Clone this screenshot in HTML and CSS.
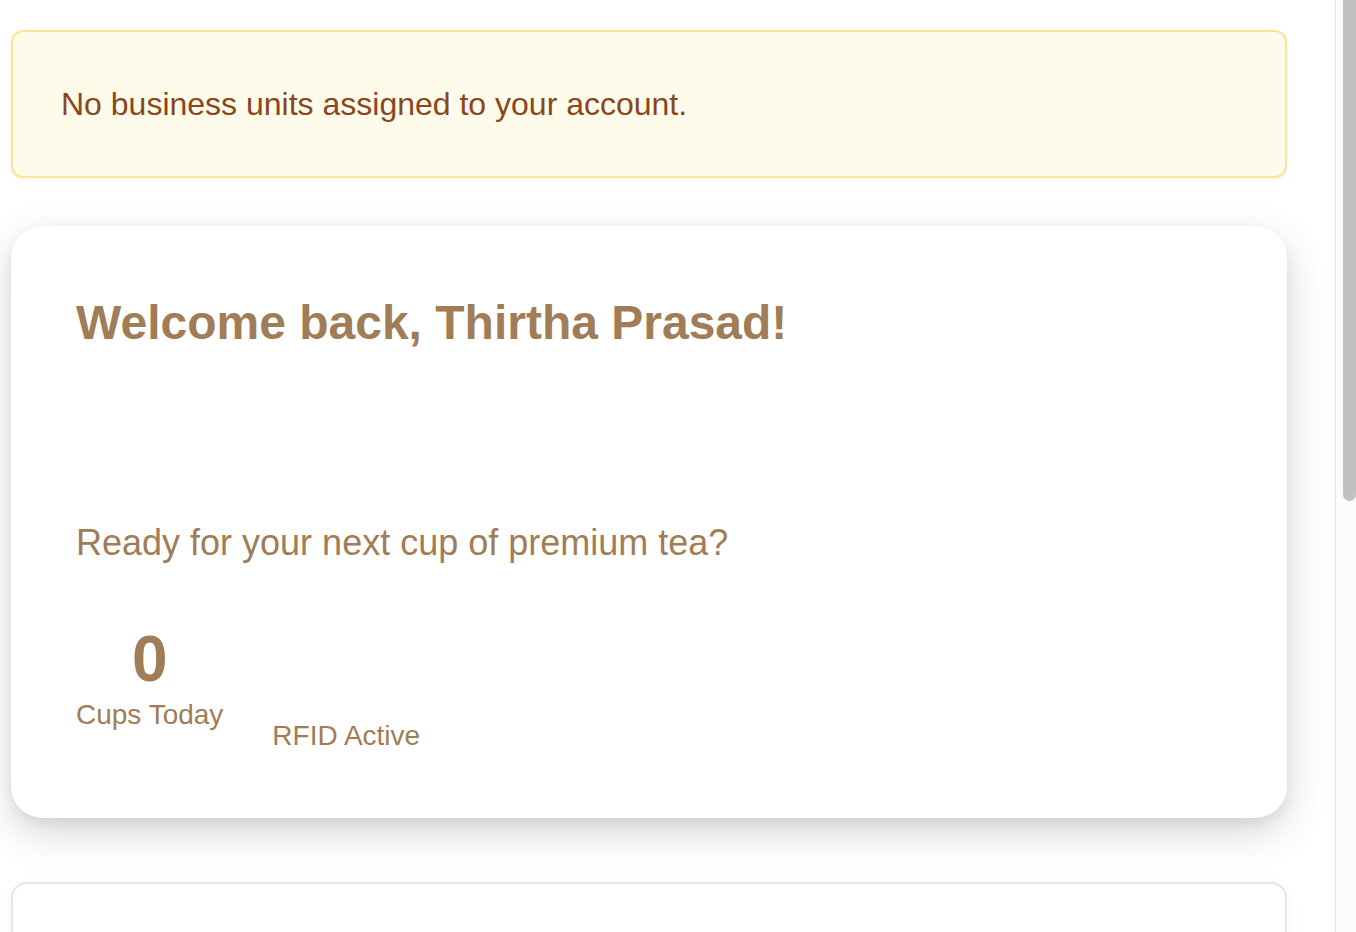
FILE: index.html
```html
<!DOCTYPE html>
<html lang="en">
<head>
<meta charset="utf-8">
<title>Dashboard</title>
<link rel="stylesheet" href="styles.css">
</head>
<body>
<div class="viewport">
  <main class="page">
    <div class="alert">No business units assigned to your account.</div>

    <section class="welcome-card">
      <h1 class="welcome-title">Welcome back, Thirtha Prasad!</h1>
      <p class="welcome-sub">Ready for your next cup of premium tea?</p>
      <div class="stats">
        <div class="stat">
          <div class="stat-value">0</div>
          <div class="stat-label">Cups Today</div>
        </div>
        <div class="stat">
          <div class="stat-icon"></div>
          <div class="stat-label">RFID Active</div>
        </div>
      </div>
    </section>

    <section class="panel"></section>
  </main>
  <div class="scroll-rail" aria-hidden="true">
    <div class="scroll-thumb"></div>
  </div>
</div>
</body>
</html>
```

FILE: styles.css
```css
html, body {
  margin: 0;
  padding: 0;
  background: #ffffff;
}

body {
  font-family: "Liberation Sans", Arial, Helvetica, sans-serif;
}

.viewport {
  display: flex;
  align-items: stretch;
}

.page {
  flex: 1;
  display: flex;
  flex-direction: column;
  padding: 30px 48px 52px 11px;
  min-width: 0;
}

.scroll-rail {
  width: 20px;
  flex: none;
  background: #fbfbfb;
  border-left: 1px solid #e6e6e6;
  display: flex;
  flex-direction: column;
  align-items: flex-end;
}

.scroll-thumb {
  width: 13px;
  height: 501px;
  background: #c1c1c1;
  border-radius: 0 0 7px 7px;
}

.alert {
  background: #fefbeb;
  border: 2px solid #fbe594;
  border-radius: 12px;
  padding: 48px 48px;
  color: #8a461c;
  font-size: 32px;
  line-height: 48px;
  box-shadow: 0 2px 4px rgba(0, 0, 0, 0.04);
}

.welcome-card {
  margin-top: 48px;
  background: #ffffff;
  border-radius: 32px;
  padding: 68px 65px 66px;
  box-shadow: 0 14px 40px rgba(0, 0, 0, 0.16), 0 6px 12px rgba(0, 0, 0, 0.06);
  color: #a07d56;
}

.welcome-title {
  margin: 0;
  font-size: 48px;
  line-height: 1.2;
  font-weight: 700;
}

.welcome-sub {
  margin: 169px 0 0;
  font-size: 36px;
  line-height: 1.2;
}

.stats {
  display: flex;
  gap: 49px;
  margin-top: 57px;
  align-items: flex-start;
}

.stat {
  display: flex;
  flex-direction: column;
  align-items: center;
}

.stat-value {
  font-size: 64px;
  font-weight: 700;
  line-height: 1.2;
}

.stat-icon {
  height: 98px;
}

.stat-label {
  font-size: 28px;
  line-height: 1.2;
}

.panel {
  margin-top: 64px;
  height: 800px;
  background: #ffffff;
  border: 2px solid #e6e6e6;
  border-radius: 16px;
  box-shadow: 0 4px 16px rgba(0, 0, 0, 0.04);
}
```
